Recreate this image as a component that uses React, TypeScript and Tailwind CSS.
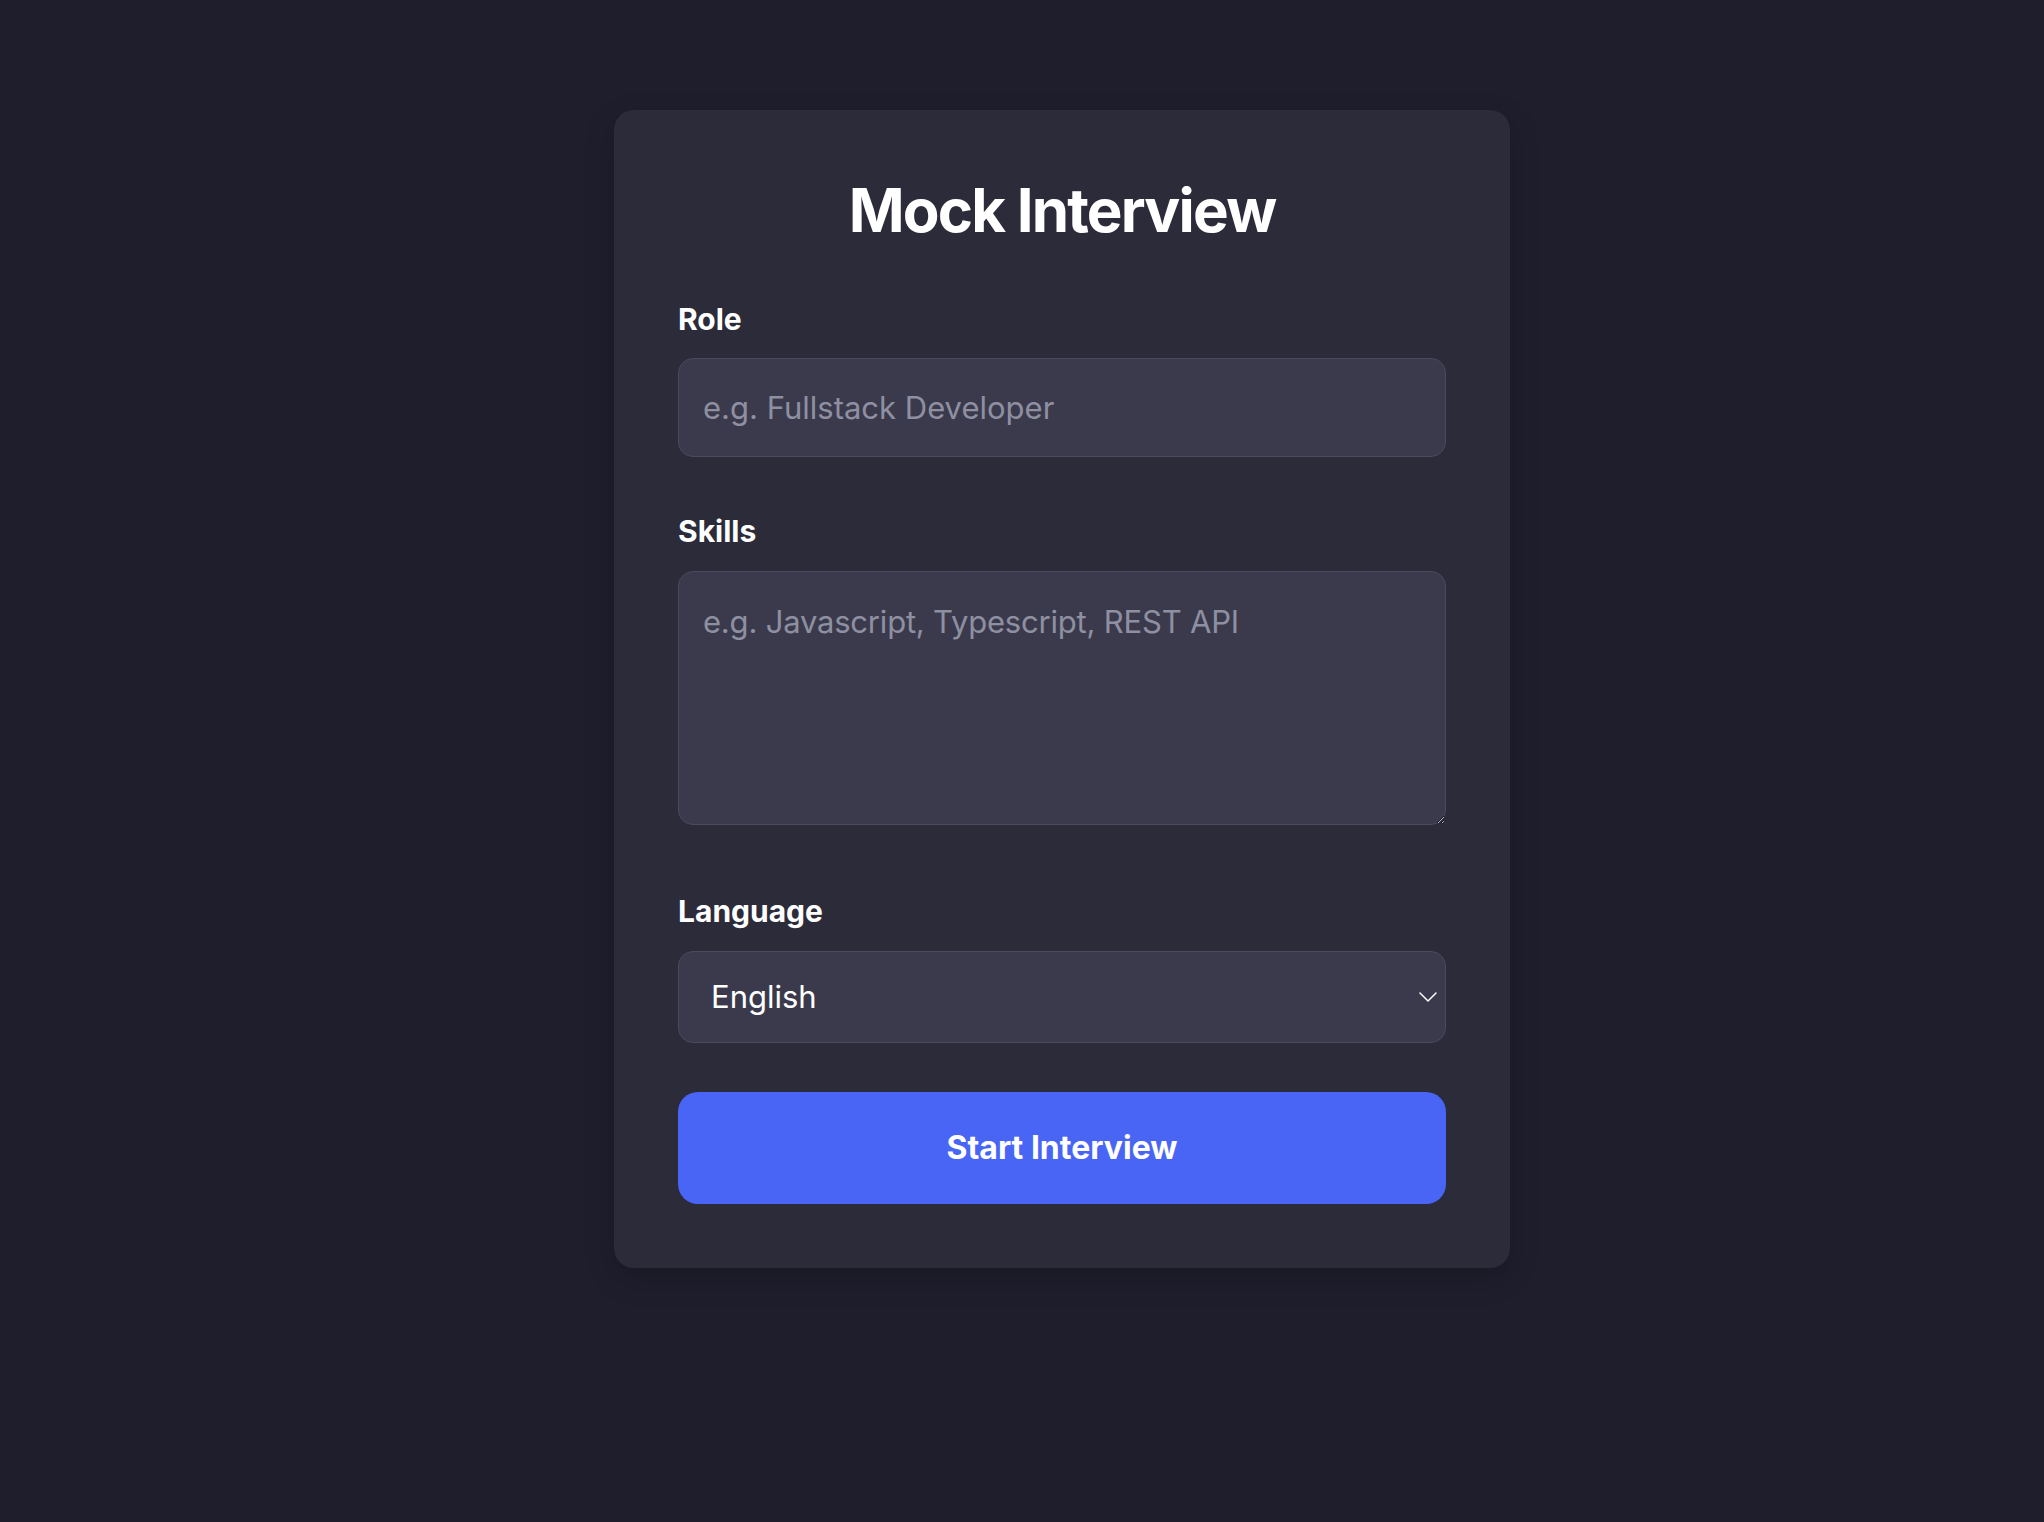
import * as React from 'react';

// Mock interview setup form

const LANGUAGES = ['English', 'Spanish', 'French', 'German'];

const fieldClass =
  'block w-full rounded-[15px] border border-[#4a495d] bg-[#3b3a4d] px-6 text-[31px] text-white placeholder:text-[#8e90a1] outline-none';

function Label({ htmlFor, children }: { htmlFor: string; children: React.ReactNode }) {
  return (
    <label htmlFor={htmlFor} className="block text-[30px] leading-[36px] font-bold text-white">
      {children}
    </label>
  );
}

export default function App() {
  const [role, setRole] = React.useState('');
  const [skills, setSkills] = React.useState('');
  const [language, setLanguage] = React.useState('English');

  return (
    <div
      className="min-h-screen w-full bg-[#1f1e2d] pl-[80px] pt-[110px]"
      style={{ fontFamily: 'Inter, "Noto Sans", sans-serif' }}
    >
      <div className="mx-auto w-[896px] rounded-[20px] bg-[#2c2b3a] p-16 shadow-[0_10px_30px_rgba(0,0,0,0.2)]">
        <h1 className="text-center text-[60px] leading-[72px] font-bold tracking-[-1.8px] text-white">
          Mock Interview
        </h1>

        <div className="mt-[55px]">
          <Label htmlFor="role">Role</Label>
          <input
            id="role"
            value={role}
            onChange={(e) => setRole(e.target.value)}
            placeholder="e.g. Fullstack Developer"
            className={`${fieldClass} mt-[21px] h-[99px]`}
          />
        </div>

        <div className="mt-[56px]">
          <Label htmlFor="skills">Skills</Label>
          <textarea
            id="skills"
            value={skills}
            onChange={(e) => setSkills(e.target.value)}
            placeholder="e.g. Javascript, Typescript, REST API"
            className={`${fieldClass} mt-[22px] h-[254px] pt-[26px] leading-[48px] tracking-[-0.2px]`}
          />
        </div>

        <div className="mt-[68px]">
          <Label htmlFor="language">Language</Label>
          <div className="relative mt-[22px]">
            <select
              id="language"
              value={language}
              onChange={(e) => setLanguage(e.target.value)}
              className={`${fieldClass} h-[92px] appearance-none pl-8`}
            >
              {LANGUAGES.map((l) => (
                <option key={l} value={l}>
                  {l}
                </option>
              ))}
            </select>
            <svg
              className="pointer-events-none absolute right-[9px] top-[41px]"
              width="18"
              height="10"
              viewBox="0 0 18 10"
              fill="none"
            >
              <path d="M1 1l8 8 8-8" stroke="#ffffff" strokeWidth="1.5" strokeLinecap="round" strokeLinejoin="round" />
            </svg>
          </div>
        </div>

        <button
          type="button"
          className="mt-[49px] block h-[112px] w-full rounded-[20px] bg-[#4865f5] text-[32px] font-bold text-white"
        >
          Start Interview
        </button>
      </div>
    </div>
  );
}
